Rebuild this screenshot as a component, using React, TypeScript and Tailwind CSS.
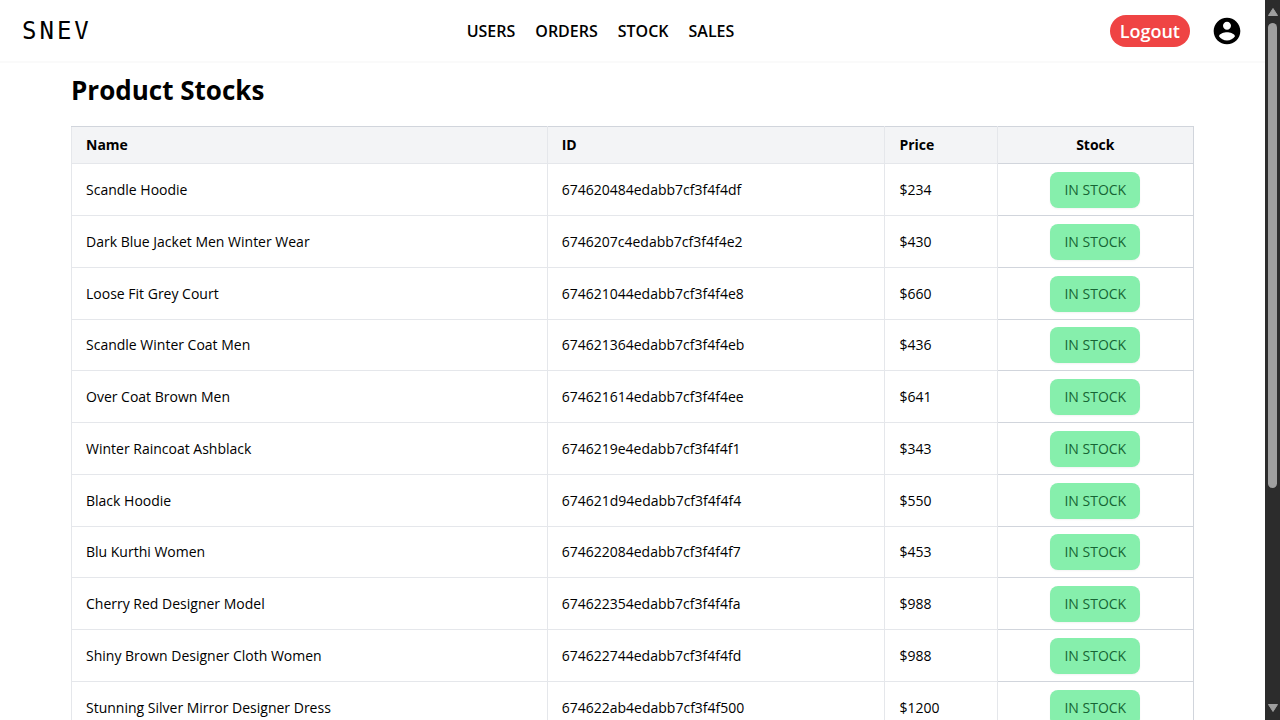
const links = ["USERS", "ORDERS", "STOCK", "SALES"];

const products = [
  { name: "Scandle Hoodie", id: "674620484edabb7cf3f4f4df", price: 234 },
  { name: "Dark Blue Jacket Men Winter Wear", id: "6746207c4edabb7cf3f4f4e2", price: 430 },
  { name: "Loose Fit Grey Court", id: "674621044edabb7cf3f4f4e8", price: 660 },
  { name: "Scandle Winter Coat Men", id: "674621364edabb7cf3f4f4eb", price: 436 },
  { name: "Over Coat Brown Men", id: "674621614edabb7cf3f4f4ee", price: 641 },
  { name: "Winter Raincoat Ashblack", id: "6746219e4edabb7cf3f4f4f1", price: 343 },
  { name: "Black Hoodie", id: "674621d94edabb7cf3f4f4f4", price: 550 },
  { name: "Blu Kurthi Women", id: "674622084edabb7cf3f4f4f7", price: 453 },
  { name: "Cherry Red Designer Model", id: "674622354edabb7cf3f4f4fa", price: 988 },
  { name: "Shiny Brown Designer Cloth Women", id: "674622744edabb7cf3f4f4fd", price: 988 },
  { name: "Stunning Silver Mirror Designer Dress", id: "674622ab4edabb7cf3f4f500", price: 1200 },
];

function Navbar() {
  return (
    <header className="grid grid-cols-[1fr_auto_1fr] items-center border-b-2 border-[#fafafa] px-[22px] pt-[15px] pb-[14px]">
      <a href="#" className="justify-self-start font-['DejaVu_Sans_Mono',monospace] text-2xl tracking-[3px]">
        SNEV
      </a>
      <nav className="-ml-16 flex gap-5 text-base font-semibold">
        {links.map((link) => (
          <a key={link} href="#">
            {link}
          </a>
        ))}
      </nav>
      <div className="flex items-center gap-[21px] justify-self-end">
        <button className="h-8 rounded-full bg-[#ef4444] px-[10px] text-lg leading-8 font-semibold text-white">
          Logout
        </button>
        <button aria-label="Account">
          <svg viewBox="0 0 24 24" className="size-8" fill="currentColor" aria-hidden="true">
            <path d="M12 2C6.48 2 2 6.48 2 12s4.48 10 10 10 10-4.48 10-10S17.52 2 12 2zm0 3c1.66 0 3 1.34 3 3s-1.34 3-3 3-3-1.34-3-3 1.34-3 3-3zm0 14.2c-2.5 0-4.71-1.28-6-3.22.03-1.99 4-3.08 6-3.08 1.99 0 5.97 1.09 6 3.08-1.29 1.94-3.5 3.22-6 3.22z" />
          </svg>
        </button>
      </div>
    </header>
  );
}

function StockTable() {
  return (
    <table className="w-full table-fixed border-collapse border border-gray-300 text-left text-sm">
      <thead className="bg-gray-100">
        <tr className="h-[37px]">
          <th className="w-[42.4%] border border-gray-200 border-t-gray-300 px-[14px]">Name</th>
          <th className="w-[30.1%] border border-gray-200 border-t-gray-300 px-[14px]">ID</th>
          <th className="w-[10%] border border-gray-200 border-t-gray-300 px-[14px]">Price</th>
          <th className="border border-gray-300 px-[14px] text-center">Stock</th>
        </tr>
      </thead>
      <tbody>
        {products.map((product) => (
          <tr key={product.id} className="h-[52px] nth-[4n]:h-[51px]">
            <td className="border border-gray-200 px-[14px]">{product.name}</td>
            <td className="border border-gray-200 px-[14px]">{product.id}</td>
            <td className="border border-gray-200 px-[14px]">${product.price}</td>
            <td className="border border-gray-300 px-[14px] text-center">
              <button className="h-9 rounded-lg bg-[#86efac] px-[14px] align-middle text-[#166534] shadow-xs">
                IN STOCK
              </button>
            </td>
          </tr>
        ))}
      </tbody>
    </table>
  );
}

function Scrollbar() {
  return (
    <div className="flex w-[15px] shrink-0 flex-col items-center justify-between bg-[#2c2c2c] py-2" aria-hidden="true">
      <svg viewBox="0 0 10 8" className="h-2 w-[10px] shrink-0" fill="#9f9f9f">
        <path d="M5 0.5 9.5 7.5H0.5z" stroke="#9f9f9f" strokeLinejoin="round" />
      </svg>
      <div className="my-[7px] w-full grow px-[3px]">
        <div className="h-[69%] rounded-full bg-[#9f9f9f]" />
      </div>
      <svg viewBox="0 0 10 8" className="h-2 w-[10px] shrink-0" fill="#9f9f9f">
        <path d="M0.5 0.5H9.5L5 7.5z" stroke="#9f9f9f" strokeLinejoin="round" />
      </svg>
    </div>
  );
}

export default function App() {
  return (
    <div className="flex h-screen overflow-hidden bg-white font-['Open_Sans','Noto_Sans',sans-serif] text-black">
      <div className="min-w-0 flex-1 overflow-hidden">
        <Navbar />
        <main className="px-[71px] pt-[9px]">
          <h1 className="mb-[18px] text-[26px] leading-9 font-bold">Product Stocks</h1>
          <StockTable />
        </main>
      </div>
      <Scrollbar />
    </div>
  );
}
